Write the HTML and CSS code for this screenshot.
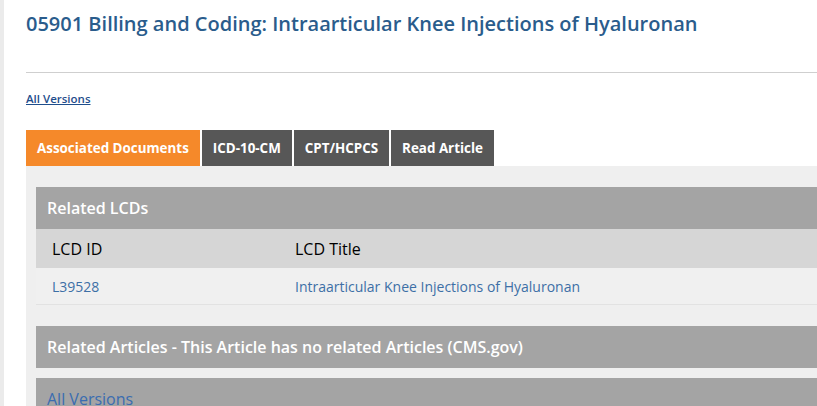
FILE: index.html
```html
<!DOCTYPE html>
<html>
<head>
<meta charset="utf-8">
<link rel="stylesheet" href="styles.css">
</head>
<body>
<div class="page">
  <h1 class="title">05901 Billing and Coding: Intraarticular Knee Injections of Hyaluronan</h1>
  <hr class="rule">
  <a class="versions" href="#">All Versions</a>
  <div class="tabs">
    <a class="tab active" href="#">Associated Documents</a>
    <a class="tab" href="#">ICD-10-CM</a>
    <a class="tab" href="#">CPT/HCPCS</a>
    <a class="tab" href="#">Read Article</a>
  </div>
  <div class="panel">
    <div class="section">
      <div class="sec-head">Related LCDs</div>
      <table class="grid">
        <thead>
          <tr><th class="c1">LCD ID</th><th>LCD Title</th></tr>
        </thead>
        <tbody>
          <tr><td class="c1"><a href="#">L39528</a></td><td><a href="#">Intraarticular Knee Injections of Hyaluronan</a></td></tr>
        </tbody>
      </table>
    </div>
    <div class="section gap">
      <div class="sec-head">Related Articles - This Article has no related Articles (CMS.gov)</div>
    </div>
    <div class="section small-gap">
      <div class="sec-head link-head"><a href="#">All Versions</a></div>
    </div>
  </div>
</div>
</body>
</html>
```
FILE: styles.css
```css
html, body {
  margin: 0;
  padding: 0;
  background: #fff;
  font-family: "Open Sans", "Liberation Sans", sans-serif;
  overflow: hidden;
  height: 406px;
}
.page {
  border-left: 4px solid #ebebeb;
  padding-left: 22px;
  height: 406px;
  box-sizing: border-box;
  overflow: hidden;
}
.title {
  margin: 0;
  padding-top: 10px;
  font-size: 20px;
  font-weight: 600;
  line-height: 28px;
  color: #2a5c8c;
}
.rule {
  margin: 34px 0 0;
  border: 0;
  border-top: 1px solid #cfcfcf;
  height: 0;
}
.versions {
  display: inline-block;
  margin-top: 18px;
  font-size: 11.5px;
  font-weight: 600;
  line-height: 16px;
  color: #1f4e8c;
  text-decoration: underline;
}
.tabs {
  display: flex;
  gap: 2px;
  margin-top: 22px;
}
.tab {
  display: block;
  height: 36px;
  line-height: 36px;
  padding: 0 11px;
  background: #575757;
  color: #fff;
  font-size: 13.4px;
  font-weight: 700;
  text-decoration: none;
}
.tab.active {
  background: #f5892a;
}
.panel {
  background: #efefef;
  padding: 21px 0 0 10px;
  height: 300px;
}
.sec-head {
  background: #a4a4a4;
  color: #fff;
  font-size: 16px;
  font-weight: 600;
  height: 42px;
  line-height: 42px;
  padding-left: 11px;
}
.grid {
  width: 100%;
  border-collapse: collapse;
}
.grid th {
  background: #d6d6d6;
  text-align: left;
  font-size: 16px;
  font-weight: 500;
  color: #000;
  height: 39px;
  padding: 0 0 0 16px;
}
.grid td {
  background: #f0f0f0;
  font-size: 14px;
  height: 36px;
  padding: 0 0 0 16px;
  border-bottom: 1px solid #e2e2e2;
}
.grid td a {
  color: #3d6fa6;
  text-decoration: none;
}
.grid .c1 {
  width: 227px;
}
.gap {
  margin-top: 21px;
}
.small-gap {
  margin-top: 10px;
}
.link-head a {
  color: #3a6cb0;
  font-weight: 400;
  text-decoration: none;
}
```
